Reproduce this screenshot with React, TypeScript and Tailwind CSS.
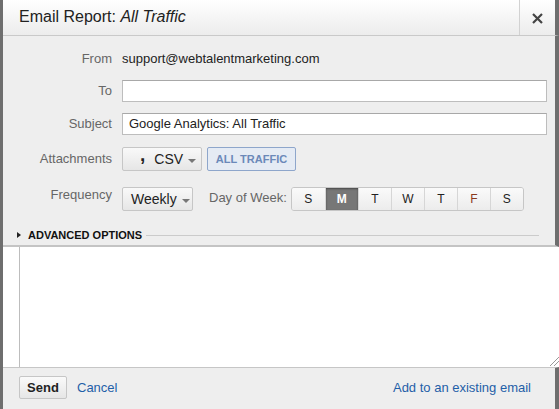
import React from "react";

const days = ["S", "M", "T", "W", "T", "F", "S"];

const Caret: React.FC = () => (
    <span className="inline-block w-0 h-0 border-l-[4px] border-r-[4px] border-t-[4px] border-l-transparent border-r-transparent border-t-[#777] ml-[5px] mt-[3px]"/>
);

const Label: React.FC<{ children: React.ReactNode; className?: string }> = ({children, className = ""}) => (
    <div className={`w-[109px] text-right text-[13px] text-[#666] shrink-0 ${className}`}>
        {children}
    </div>
);

const App: React.FC = () => {
    return (
        <div className="w-[559px] h-[409px] overflow-hidden bg-white flex flex-col border-l-[3px] border-[#6e6e6e] text-[#222]"
             style={{fontFamily: '"Liberation Sans", Arial, sans-serif'}}>
            {/* title bar */}
            <div className="h-[36px] flex border-b border-[#c9c9c9] border-r-[4px] border-r-[#6e6e6e] bg-gradient-to-b from-white to-[#ececec] shrink-0">
                <div className="flex-1 flex items-center pl-[16px] text-[16px] pb-[2px]">
                    Email Report:&nbsp;<i>All Traffic</i>
                </div>
                <div className="w-[36px] border-l border-[#d2d2d2] flex items-center justify-center pt-[2px]">
                    <svg width="11" height="11" viewBox="0 0 11 11">
                        <path d="M1 1 L10 10 M10 1 L1 10" stroke="#444" strokeWidth="2.2"/>
                    </svg>
                </div>
            </div>

            {/* form */}
            <div className="h-[211px] bg-[#eeeeee] border-b-2 border-[#c4c4c4] border-r-[4px] border-r-[#6e6e6e] shrink-0 flex flex-col">
                <div className="mt-[12px] h-[22px] flex items-center gap-[10px]">
                    <Label>From</Label>
                    <div className="text-[13px]">support@webtalentmarketing.com</div>
                </div>
                <div className="mt-[10px] h-[22px] flex items-center gap-[10px]">
                    <Label>To</Label>
                    <div className="w-[425px] h-[22px] bg-white border border-[#bdbdbd] border-t-[#a8a8a8]"/>
                </div>
                <div className="mt-[11px] h-[22px] flex items-center gap-[10px]">
                    <Label>Subject</Label>
                    <div className="w-[425px] h-[22px] bg-white border border-[#bdbdbd] border-t-[#a8a8a8] flex items-center px-[6px] text-[13px]">
                        Google Analytics: All Traffic
                    </div>
                </div>
                <div className="mt-[12px] h-[24px] flex items-center gap-[10px]">
                    <Label>Attachments</Label>
                    <div className="flex items-center gap-[5px]">
                        <div className="w-[80px] h-[24px] flex items-center pl-[17px] rounded-[2px] border border-[#c6c6c6] bg-gradient-to-b from-[#f9f9f9] to-[#e6e6e6] text-[14px]">
                            <span className="font-bold text-[19px] leading-none -mt-[9px] mr-[9px] text-[#222]">,</span>
                            CSV
                            <Caret/>
                        </div>
                        <div className="w-[89px] h-[24px] flex items-center justify-center rounded-[2px] border border-[#8ea6cb] bg-[#e5ebf4] text-[11px] font-bold text-[#6b89b9]">
                            ALL TRAFFIC
                        </div>
                    </div>
                </div>
                <div className="mt-[16px] h-[24px] flex items-start gap-[10px]">
                    <Label className="leading-[15px]">Frequency</Label>
                    <div className="w-[71px] h-[24px] flex items-center pl-[8px] rounded-[2px] border border-[#c6c6c6] bg-gradient-to-b from-[#f9f9f9] to-[#e6e6e6] text-[14px]">
                        Weekly
                        <Caret/>
                    </div>
                    <div className="flex items-center gap-[4px] ml-[6px]">
                        <div className="h-[24px] flex items-center text-[13px] text-[#666] pb-[2px]">
                            Day of Week:
                        </div>
                        <div className="flex h-[24px] rounded-[3px] border border-[#c6c6c6] overflow-hidden">
                            {days.map((d, i) => (
                                <div key={i}
                                     className={`w-[33px] h-full flex items-center justify-center text-[12px] ${i > 0 ? "border-l border-[#d6d6d6]" : ""} ${i === 1 ? "bg-[#777777] text-white font-bold shadow-[inset_0_1px_2px_rgba(0,0,0,0.4)]" : "bg-gradient-to-b from-[#fafafa] to-[#ececec]"} ${i === 5 ? "text-[#8a3a1c]" : ""}`}>
                                    {d}
                                </div>
                            ))}
                        </div>
                    </div>
                </div>
                <div className="mt-[17px] h-[14px] flex items-center pl-[14px] pr-[16px]">
                    <span className="inline-block w-0 h-0 border-t-[3.5px] border-b-[3.5px] border-l-[4px] border-t-transparent border-b-transparent border-l-[#222] mr-[7px]"/>
                    <span className="text-[11px] font-bold text-[#111]">ADVANCED OPTIONS</span>
                    <div className="flex-1 h-px bg-[#cbcbcb] ml-[4px]"/>
                </div>
            </div>

            {/* message area */}
            <div className="h-[120px] bg-white pl-[16px] shrink-0 relative">
                <div className="h-full border-l border-[#bdbdbd]"/>
                <svg className="absolute right-0 bottom-[1px]" width="11" height="11" viewBox="0 0 11 11">
                    <path d="M11 2 L2 11 M11 6 L6 11" stroke="#999" strokeWidth="1"/>
                </svg>
            </div>

            {/* footer */}
            <div className="flex-1 bg-[#eeeeee] border-t border-[#c6c6c6] border-r-[4px] border-r-[#6e6e6e] flex items-center pl-[16px] pr-[24px] pb-[2px]">
                <div className="w-[48px] h-[23px] flex items-center justify-center rounded-[2px] border border-[#c6c6c6] bg-gradient-to-b from-[#fafafa] to-[#e6e6e6] text-[13px] font-bold">
                    Send
                </div>
                <span className="ml-[10px] text-[13px] text-[#1f5fa8]">Cancel</span>
                <span className="ml-auto text-[13px] text-[#1f5fa8]">Add to an existing email</span>
            </div>
        </div>
    );
};

export default App;
